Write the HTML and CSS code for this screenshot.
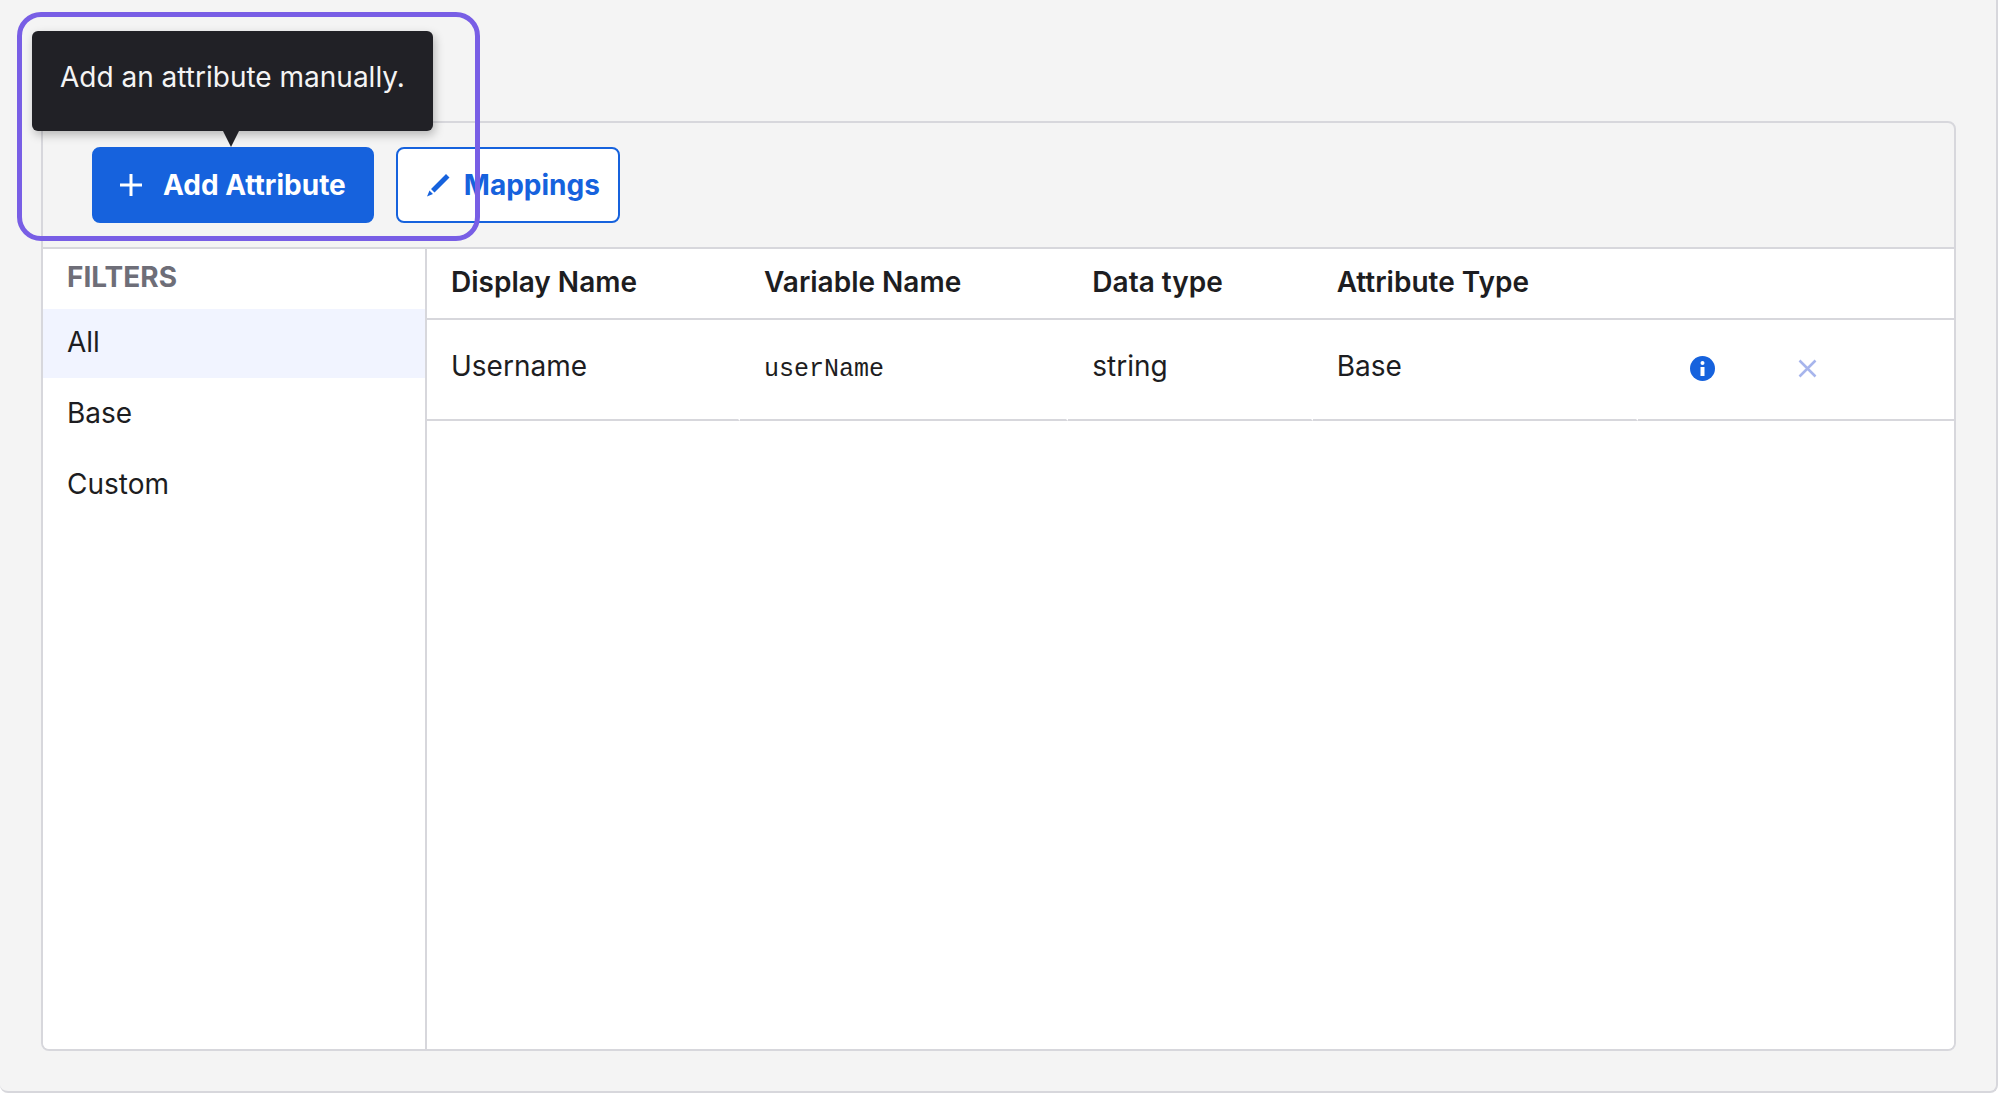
FILE: index.html
```html
<!DOCTYPE html>
<html lang="en">
<head>
  <meta charset="utf-8">
  <meta name="viewport" content="width=device-width, initial-scale=1">
  <title>Attributes</title>
  <link rel="stylesheet" href="styles.css">
</head>
<body>
  <main class="panel">
    <section class="card">
      <div class="toolbar">
        <div class="tooltip-anchor">
          <button class="button button-primary" type="button" aria-describedby="add-tip">
            <svg class="icon-plus" viewBox="0 0 22 22" aria-hidden="true"><path d="M11 0v22M0 11h22" fill="none" stroke="currentColor" stroke-width="3"/></svg>
            Add Attribute
          </button>
          <div class="tooltip" id="add-tip" role="tooltip">Add an attribute manually.</div>
        </div>
        <button class="button button-secondary" type="button">
          <svg class="icon-pencil" viewBox="0 0 24 24" aria-hidden="true"><path d="M20 1l3.500 3.500L8.500 19.500 5 16zM3.500 17.500l3.500 3.500L1 23.500z" fill="currentColor"/></svg>
          Mappings
        </button>
      </div>
      <div class="content">
        <nav class="filters" aria-label="Filters">
          <h2 class="filters-title">FILTERS</h2>
          <ul class="filters-list">
            <li><a class="filter filter-active" href="#all">All</a></li>
            <li><a class="filter" href="#base">Base</a></li>
            <li><a class="filter" href="#custom">Custom</a></li>
          </ul>
        </nav>
        <div class="results">
          <table class="attributes">
            <colgroup>
              <col class="col-display">
              <col class="col-variable">
              <col class="col-data">
              <col class="col-type">
              <col>
            </colgroup>
            <thead>
              <tr><th scope="col">Display Name</th><th scope="col">Variable Name</th><th scope="col">Data type</th><th scope="col">Attribute Type</th><td></td></tr>
            </thead>
            <tbody>
              <tr>
                <td>Username</td>
                <td class="variable">userName</td>
                <td>string</td>
                <td>Base</td>
                <td class="actions-cell">
                  <div class="actions">
                    <button class="icon-button info" type="button" aria-label="Details">
                      <svg viewBox="0 0 25 25" aria-hidden="true"><circle cx="12.500" cy="12.500" r="12.500" fill="currentColor"/><circle cx="12.500" cy="7" r="2" fill="#fff"/><path d="M10.500 11h4v9h-4z" fill="#fff"/></svg>
                    </button>
                    <button class="icon-button remove" type="button" aria-label="Remove" disabled>
                      <svg viewBox="0 0 25 25" aria-hidden="true"><path d="M4.500 4.500l16 16M20.500 4.500l-16 16" fill="none" stroke="currentColor" stroke-width="2.500"/></svg>
                    </button>
                  </div>
                </td>
              </tr>
            </tbody>
          </table>
        </div>
      </div>
    </section>
    <div class="highlight" aria-hidden="true"></div>
  </main>
</body>
</html>
```
FILE: styles.css
```css
* {
  box-sizing: border-box;
}

body {
  margin: 0;
  padding: 0 2px 5px 0;
  min-height: 100vh;
  display: flex;
  background: #fff;
  color: #1d1d21;
  font: 28px/36px Inter, "Liberation Sans", sans-serif;
}

.panel {
  position: relative;
  flex: 1;
  display: flex;
  padding: 121px 40px 40px 41px;
  background: #f4f4f4;
  border: solid #d7d7dc;
  border-width: 0 2px 2px 0;
  border-radius: 0 0 8px 8px;
}

.card {
  flex: 1;
  display: flex;
  flex-direction: column;
  border: 2px solid #d7d7dc;
  border-radius: 8px;
}

.toolbar {
  display: flex;
  gap: 22px;
  padding: 24px 49px;
  border-bottom: 2px solid #d7d7dc;
}

.button {
  display: flex;
  align-items: center;
  height: 76px;
  border: 2px solid #1662dd;
  border-radius: 8px;
  font: inherit;
  font-weight: 700;
  white-space: nowrap;
}

.button-primary {
  gap: 21px;
  padding: 0 26px;
  background: #1662dd;
  color: #fff;
}

.button-secondary {
  gap: 14px;
  padding: 0 18px 0 28px;
  background: #fff;
  color: #1662dd;
}

.icon-plus {
  width: 22px;
  height: 22px;
}

.icon-pencil {
  width: 24px;
  height: 24px;
}

.tooltip-anchor {
  position: relative;
}

.tooltip {
  position: absolute;
  left: -60px;
  bottom: calc(100% + 16px);
  padding: 28px 28px 36px;
  background: #212126;
  border-radius: 6px;
  box-shadow: 2px 4px 10px rgba(0, 0, 0, 0.25);
  color: #f4f4f4;
  white-space: nowrap;
}

.tooltip::after {
  content: "";
  position: absolute;
  top: 100%;
  left: 50%;
  margin-left: -9px;
  border: solid transparent;
  border-width: 16px 8px 0;
  border-top-color: #212126;
}

.highlight {
  position: absolute;
  left: 17px;
  top: 12px;
  width: 463px;
  height: 229px;
  border: 5px solid #785ee5;
  border-radius: 24px;
  pointer-events: none;
}

.content {
  flex: 1;
  display: flex;
  background: #fff;
  border-radius: 0 0 6px 6px;
}

.filters {
  width: 384px;
  border-right: 2px solid #d7d7dc;
}

.filters-title {
  margin: 0;
  padding: 10px 24px 14px;
  color: #6e6e78;
  font-size: 28px;
  font-weight: 700;
}

.filters-list {
  display: grid;
  gap: 2px;
  margin: 0;
  padding: 0;
  list-style: none;
}

.filter {
  display: block;
  padding: 15px 24px 18px;
  color: inherit;
  text-decoration: none;
}

.filter-active {
  background: #f1f4ff;
}

.results {
  flex: 1;
}

.attributes {
  width: 100%;
  table-layout: fixed;
  border-collapse: separate;
  border-spacing: 0;
}

.col-display {
  width: 20.5%;
}

.col-variable {
  width: 21.5%;
}

.col-data {
  width: 16%;
}

.col-type {
  width: 21.3%;
}

.attributes th,
.attributes td {
  padding: 15px 24px 18px;
  border-bottom: 2px solid #d7d7dc;
  text-align: left;
  font-weight: 600;
}

.attributes tbody td {
  padding: 28px 24px 31px;
  font-weight: 400;
  vertical-align: baseline;
}

.attributes tbody td:not(:last-child) {
  border-right: 2px solid #fff;
}

.attributes .variable {
  font-family: "Liberation Mono", monospace;
  font-size: 25px;
}

.attributes tbody .actions-cell {
  vertical-align: top;
}

.actions {
  display: flex;
  gap: 80px;
  padding: 8px 0 3px 28px;
}

.icon-button {
  display: flex;
  width: 25px;
  height: 25px;
  padding: 0;
  border: 0;
  background: none;
}

.info {
  color: #1662dd;
}

.remove {
  color: #a7b5ec;
}
```
